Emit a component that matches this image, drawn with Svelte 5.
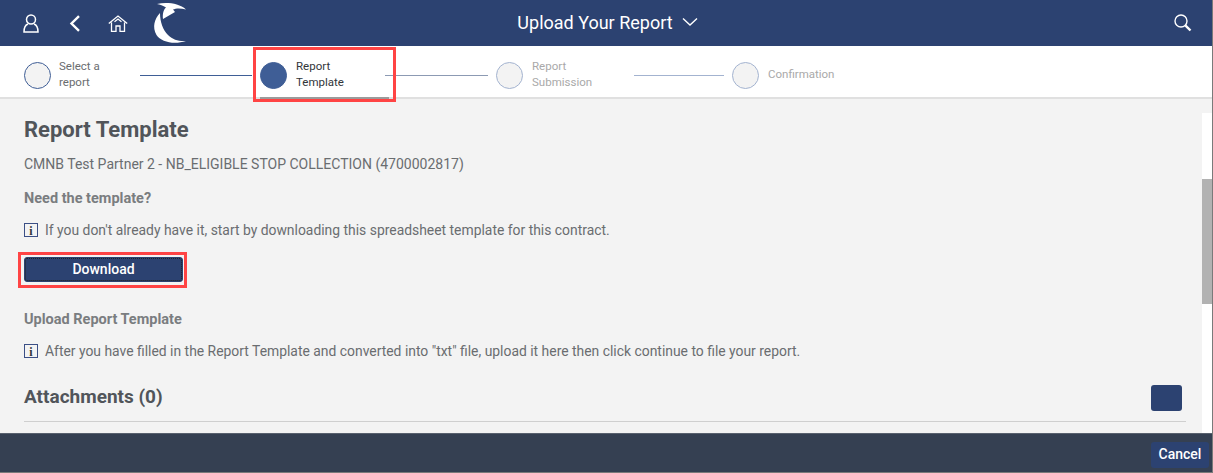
<script>
  const steps = [
    { label: ['Select a', 'report'], state: 'done', line: 112, width: 116 },
    { label: ['Report', 'Template'], state: 'active', line: 103, width: 125 },
    { label: ['Report', 'Submission'], state: 'todo', line: 90, width: 138 },
    { label: ['Confirmation'], state: 'todo', line: 0, width: 0 }
  ];
</script>

<div class="app">
  <header class="shell">
    <div class="left">
      <svg class="ic user" width="16" height="19" viewBox="0 0 16 19" fill="none" stroke="#fff" stroke-width="1.500">
        <circle cx="8" cy="5.500" r="4.500" />
        <path d="M5 10 C2 11 1 13.500 1 18 H15 C15 13.500 14 11 11 10" />
      </svg>
      <svg class="ic back" width="12" height="17" viewBox="0 0 12 17" fill="none" stroke="#fff" stroke-width="2.400">
        <path d="M10 1.200 L2.500 8.500 L10 15.800" />
      </svg>
      <svg class="ic home" width="20" height="17" viewBox="0 0 20 17" fill="none" stroke="#fff" stroke-width="1.300">
        <path d="M0.800 8.500 L10 1 L19.200 8.500 M3.500 7.500 V16.400 H8 V11 H12 V16.400 H16.500 V7.500 M6.500 6.800 L10 4 L13.500 6.800" />
      </svg>
      <svg class="logo" width="40" height="46" viewBox="0 0 40 46" fill="#fff">
        <path d="M6 4 C15 2 28 3 35 9.500 C30 8 25 8 22 9.500 L24 12 L12 19 C11.500 15 12 10 15 7.500 C12 5.500 9 4.500 6 4 Z" />
        <path d="M9 13 C3.500 19 1 27 5.500 35 C10 42 23 45 35 41 C28 41.500 22 40 17 35 C12 30 9 22 9 13 Z" />
      </svg>
    </div>
    <div class="title">
      <span>Upload Your Report</span>
      <svg width="16" height="10" viewBox="0 0 16 10" fill="none" stroke="#fff" stroke-width="1.400">
        <path d="M1 1.500 L8 8 L15 1.500" />
      </svg>
    </div>
    <svg class="search" width="18" height="18" viewBox="0 0 18 18" fill="none" stroke="#fff">
      <circle cx="7" cy="7" r="6" stroke-width="1.400" />
      <path d="M11.300 11.300 L16.500 16.500" stroke-width="2.400" />
    </svg>
  </header>

  <nav class="stepper">
    {#each steps as step}
      <div class="step {step.state}" style:width={step.line ? step.width + 'px' : null}>
        <span class="dot"></span>
        <span class="label">
          {#each step.label as line}<span>{line}</span>{/each}
        </span>
        {#if step.state === 'active'}<span class="underline"></span>{/if}
        {#if step.state === 'active'}<span class="mark stepmark"></span>{/if}
      </div>
      {#if step.line}
        <span class="line {step.state}" style:width={step.line + 'px'}></span>
      {/if}
    {/each}
  </nav>

  <div class="body">
    <main class="content">
      <h2 class="page">Report Template</h2>
      <p class="contract">CMNB Test Partner 2 - NB_ELIGIBLE STOP COLLECTION (4700002817)</p>
      <h3>Need the template?</h3>
      <p class="info">
        <svg width="14" height="14" viewBox="0 0 14 14"><rect x="0.500" y="0.500" width="13" height="13" fill="none" stroke="#3b4f86" /><text x="7" y="11.500" text-anchor="middle" class="i">i</text></svg>
        If you don't already have it, start by downloading this spreadsheet template for this contract.
      </p>
      <button class="download">Download<span class="mark dlmark"></span></button>
      <h3 class="upload">Upload Report Template</h3>
      <p class="info">
        <svg width="14" height="14" viewBox="0 0 14 14"><rect x="0.500" y="0.500" width="13" height="13" fill="none" stroke="#3b4f86" /><text x="7" y="11.500" text-anchor="middle" class="i">i</text></svg>
        After you have filled in the Report Template and converted into "txt" file, upload it here then click continue to file your report.
      </p>
      <div class="attach">
        <h2>Attachments (0)</h2>
        <span class="add"></span>
      </div>
    </main>
    <div class="track"><div class="thumb"></div></div>
  </div>

  <footer class="foot"><button class="cancel">Cancel</button></footer>
</div>

<style>
  :global(body) { margin: 0; background: #fff; }
  .app {
    width: 1212px; height: 472px; display: flex; flex-direction: column;
    border-right: 1px solid #7a7a7a; border-bottom: 1px solid #7a7a7a;
    font-family: Roboto, "Noto Sans", sans-serif; overflow: hidden;
  }
  .shell {
    height: 46px; flex: none; background: #2c4271; position: relative;
    display: flex; align-items: center; justify-content: center;
  }
  .left { position: absolute; left: 0; top: 0; height: 46px; display: flex; align-items: center; padding-left: 23px; }
  .ic.back { margin-left: 30px; }
  .ic.home { margin-left: 27px; }
  .logo { margin-left: 23px; }
  .title { display: flex; align-items: center; gap: 9px; color: #fff; font-size: 18px; margin: 0 0 2px 3px; }
  .search { position: absolute; left: 1174px; top: 14px; }

  .stepper {
    height: 53px; flex: none; background: #fff; border-bottom: 2px solid #e0e0e0; box-sizing: border-box;
    display: flex; align-items: center; padding: 7px 0 0 24px;
  }
  .step { display: flex; align-items: center; gap: 9px; height: 44px; position: relative; flex: none; }
  .dot { width: 25px; height: 25px; border-radius: 50%; background: #f3f3f3; border: 1px solid #3f5e96; flex: none; }
  .label { display: flex; flex-direction: column; font-size: 11.500px; line-height: 16px; color: #6a6d70; margin-bottom: 2px; }
  .done { gap: 8px; }
  .active .dot { background: #3f5e96; }
  .active .label { color: #32363a; }
  .todo .dot { border-color: #a3b3d0; }
  .todo .label { color: #a9a9a9; }
  .line { height: 1px; background: #3f5e96; flex: none; margin-right: 8px; }
  .line.active { background: #8c9ab3; }
  .line.todo { background: #a3b3d0; }
  .underline { position: absolute; left: 0; width: 129px; bottom: -2px; height: 2px; background: #9b9b9b; }
  .mark { position: absolute; box-sizing: border-box; border: 3px solid #ff4444; pointer-events: none; }
  .stepmark { left: -7px; top: -6px; width: 143px; height: 55px; }

  .body { flex: 1; min-height: 0; display: flex; background: #f3f3f3; }
  .content { flex: 1; padding: 20px 16px 0 24px; color: #6a6d70; font-size: 14px; }
  h2 { margin: 0 0 2px; font-size: 19px; line-height: 20px; font-weight: 700; color: #51555a; }
  h2.page { font-size: 22px; margin: 1px 0 -1px; }
  p { margin: 0; }
  .contract { margin-top: 16px; line-height: 18px; }
  h3 { margin: 17px 0 -1px; font-size: 14.500px; line-height: 18px; font-weight: 700; color: #7a7d80; }
  .info { margin-top: 14px; font-size: 13.900px; line-height: 18px; display: flex; align-items: center; gap: 7px; }
  .i { font-family: "Liberation Serif", serif; font-weight: 700; font-size: 12px; fill: #32363a; }
  .download {
    display: block; position: relative; width: 159px; height: 25px; margin-top: 18px; padding: 0 0 2px;
    background: #2c4271; color: #fff; border: 1px solid #2c4271; outline: 1px dotted #222; outline-offset: -2px;
    border-radius: 3px; font: inherit; font-size: 14px; font-weight: 500;
  }
  .dlmark { left: -7px; top: -6px; width: 169px; height: 36px; }
  .upload { margin-top: 29px; }
  .attach { margin-top: 25px; padding-bottom: 10px; display: flex; justify-content: space-between; align-items: center; border-bottom: 1px solid #cfcfcf; }
  .add { width: 31px; height: 26px; margin-right: 4px; background: #2c4271; border-radius: 3px; }
  .track { width: 10px; flex: none; margin-top: 14px; background: #fff; }
  .thumb { height: 125px; margin-top: 66px; background: #b2b2b2; }

  .foot {
    height: 39px; flex: none; background: #354052; border-top: 1px solid #59616e; box-sizing: border-box;
    display: flex; align-items: center; justify-content: flex-end; padding-top: 3px;
  }
  .cancel { width: 58px; height: 26px; margin-right: 3px; background: #2c4271; border: 0; border-radius: 3px; color: #fff; font: inherit; font-size: 14px; font-weight: 500; padding: 0 0 2px; }
</style>
